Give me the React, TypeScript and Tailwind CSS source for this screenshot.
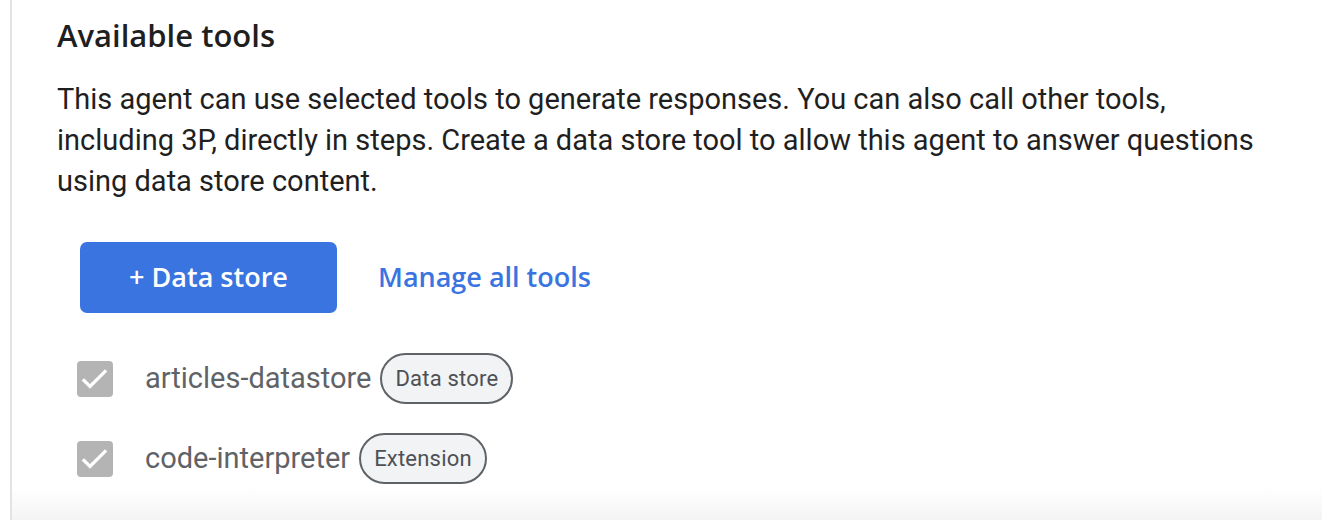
import React from "react"

function Check() {
  return (
    <div className="h-[36px] w-[36px] rounded-[4px] bg-[#b4b4b4]">
      <svg viewBox="0 0 36 36" className="h-[36px] w-[36px]" fill="none" stroke="white" strokeWidth="3.2" strokeLinecap="square" strokeLinejoin="miter">
        <path d="M7 19.5l6 6L28 10.5" />
      </svg>
    </div>
  )
}

function ToolRow({ name, kind }: { name: string; kind: string }) {
  return (
    <div className="flex h-[51px] items-center">
      <div className="ml-[20px] w-[68px]">
        <Check />
      </div>
      <span className="text-[29px] text-[#5f6368] font-['Roboto',sans-serif]">{name}</span>
      <span className="ml-[9px] flex h-[51px] items-center rounded-full border-2 border-[#5f6368] bg-[#f1f3f4] px-[13px] text-[22px] text-[#4d5156] font-['Roboto',sans-serif] tracking-[0.2px]">
        {kind}
      </span>
    </div>
  )
}

export default function App() {
  return (
    <div className="h-[520px] w-[1322px] overflow-hidden bg-white">
      <div className="flex h-full">
        <div className="ml-[10px] w-[2px] bg-[#e3e3e3]" />
        <div className="flex flex-1 flex-col">
          <div className="flex-1 pl-[45px] pt-[15px]">
            <h2 className="text-[31px] font-semibold leading-[40px] text-[#1f1f1f] font-['Open_Sans',sans-serif]">
              Available tools
            </h2>
            <p className="mt-[24px] max-w-[1200px] text-[29px] leading-[41px] text-[#1f1f1f] font-['Roboto',sans-serif]">
              This agent can use selected tools to generate responses. You can also call other tools, including 3P, directly in steps. Create a data store tool to allow this agent to answer questions using data store content.
            </p>
            <div className="mt-[40px] flex items-center">
              <button className="ml-[23px] h-[71px] w-[257px] rounded-[7px] bg-[#3a74e0] text-[27px] font-semibold text-white font-['Open_Sans',sans-serif]">
                + Data store
              </button>
              <span className="ml-[41px] text-[27px] font-semibold text-[#3a74e0] font-['Open_Sans',sans-serif]">
                Manage all tools
              </span>
            </div>
            <div className="mt-[40px] flex flex-col gap-[29px]">
              <ToolRow name="articles-datastore" kind="Data store" />
              <ToolRow name="code-interpreter" kind="Extension" />
            </div>
          </div>
          <div className="h-[32px] bg-gradient-to-b from-white to-[#f4f4f4]" />
        </div>
      </div>
    </div>
  )
}
